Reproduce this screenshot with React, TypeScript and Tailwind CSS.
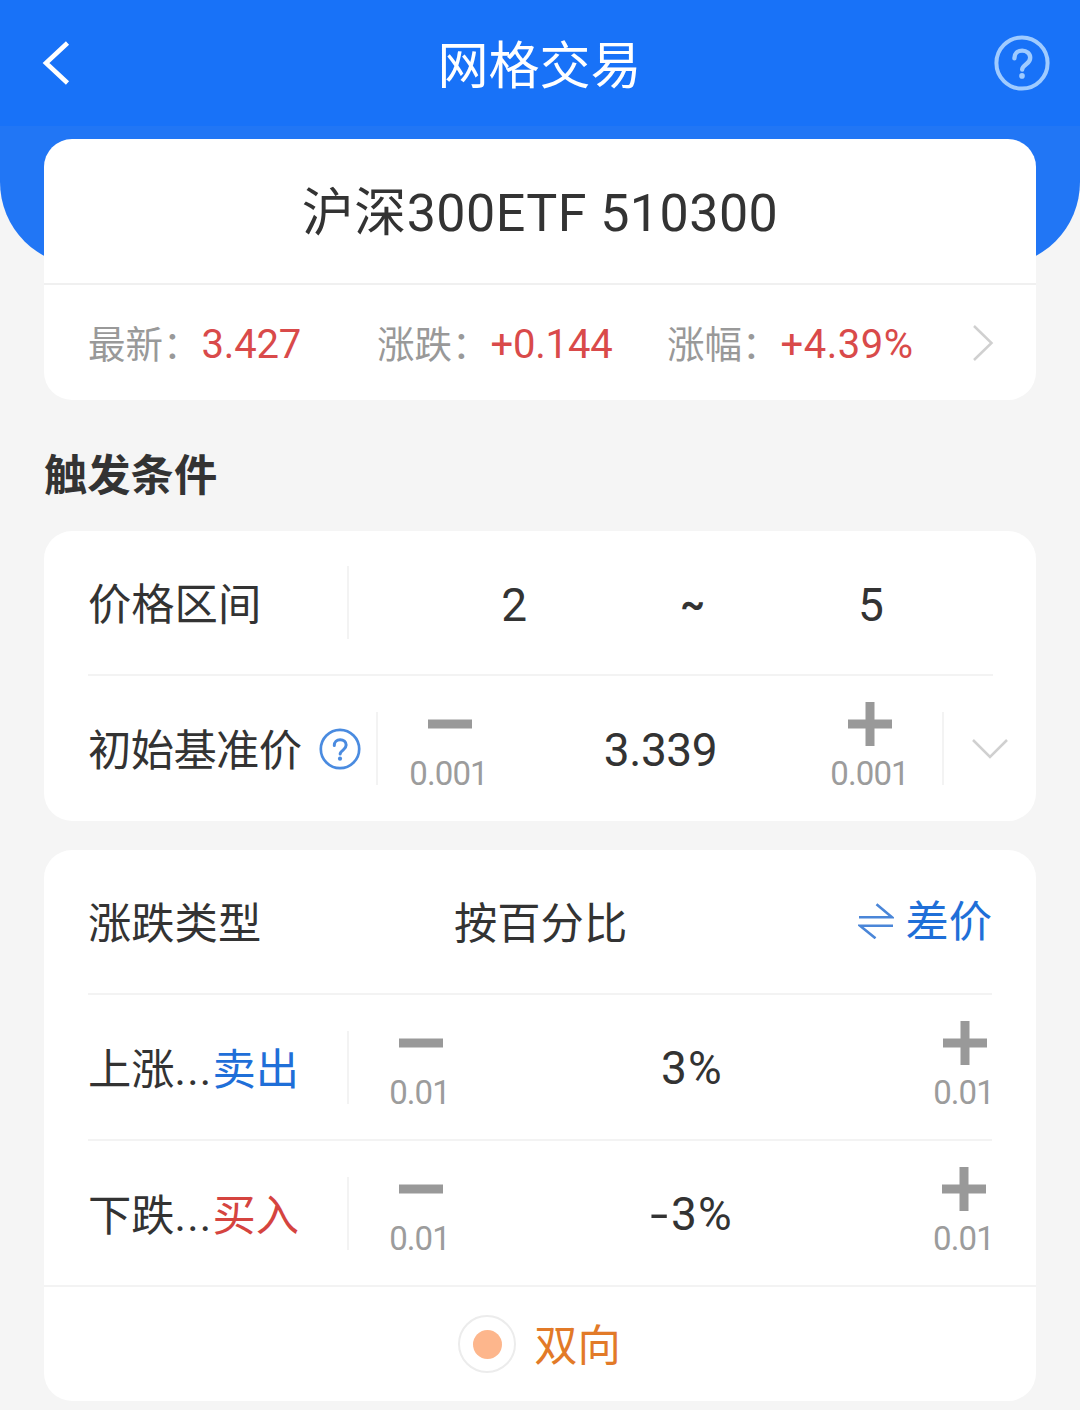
import { useState } from "react";

const quotes = [
  { label: "最新：", value: "3.427", width: "w-[289px]", tracking: "tracking-[-0.2px]" },
  { label: "涨跌：", value: "+0.144", width: "w-[290px]", tracking: "tracking-[-0.2px]" },
  { label: "涨幅：", value: "+4.39%", width: "w-[305px]", tracking: "tracking-[0.5px]" },
];

function HelpIcon({
  className,
  strokeWidth,
}: {
  className: string;
  strokeWidth: number;
}) {
  return (
    <svg
      viewBox="0 0 56 56"
      fill="none"
      stroke="currentColor"
      strokeWidth={strokeWidth}
      className={className}
    >
      <circle cx="28" cy="28" r="25.6" />
      <path
        d="M20.4 23.2c0-4.6 3.3-7.6 7.8-7.6s8 3 8 7.2c0 2.9-1.5 4.5-3.8 6.3-2.7 2.1-4.2 3.3-4.2 5.4"
        strokeWidth={strokeWidth + 0.4}
        strokeLinecap="round"
      />
      <circle cx="28" cy="40.9" r="2.8" fill="currentColor" stroke="none" />
    </svg>
  );
}

function Divider() {
  return <div className="h-[73px] w-[2px] shrink-0 bg-[#f3f3f3]" />;
}

function StepButton({
  type,
  step,
  onClick,
}: {
  type: "minus" | "plus";
  step: number;
  onClick: () => void;
}) {
  return (
    <button
      onClick={onClick}
      className="flex h-full w-[80px] shrink-0 flex-col items-center pt-[26px]"
    >
      <svg viewBox="0 0 44 44" className="ml-[3px] h-[44px] w-[44px] fill-[#999]">
        <rect x="0" y="17.5" width="44" height="9" />
        {type === "plus" && <rect x="17.5" y="0" width="9" height="44" />}
      </svg>
      <span className="mt-[8px] ml-[1px] text-[33px] leading-[40px] tracking-[-0.9px] text-[#9c9c9c]">
        {step}
      </span>
    </button>
  );
}

export default function App() {
  const [basePrice, setBasePrice] = useState(3.339);
  const [rise, setRise] = useState(3);
  const [fall, setFall] = useState(3);

  return (
    <div className="h-[1410px] w-[1080px] overflow-hidden bg-[#f5f5f5] font-[Roboto,'Noto_Sans_CJK_SC',sans-serif] text-[43.3px] leading-[60px] text-[#333]">

      <header className="flex h-[126px] items-center justify-between bg-[#1872f8] pr-[30px] pl-[42px]">
        <svg
          viewBox="0 0 28 44"
          fill="none"
          stroke="white"
          strokeWidth="4.6"
          className="h-[44px] w-[43px]"
          preserveAspectRatio="xMinYMid"
        >
          <path d="M25.5 2 4 22l21.5 20" />
        </svg>

        <h1 className="pt-[7px] text-[51px] text-white">网格交易</h1>

        <HelpIcon
          className="h-[56px] w-[56px] text-[#9fcbff]"
          strokeWidth={4}
        />
      </header>

      <div className="h-[140px] rounded-b-[84px] bg-[#2176f5]" />

      <main className="-mt-[127px] px-[44px]">

        <section className="h-[261px] rounded-[28px] bg-white">
          <div className="flex h-[146px] items-center justify-center border-b-2 border-[#f0f0f0] pt-[5px] text-[52px]">
            <span className="tracking-[0.45px]">沪深300ETF 510300</span>
          </div>

          <div className="flex h-[115px] items-center pl-[44px]">
            {quotes.map((item) => (
              <div
                key={item.label}
                className={`flex shrink-0 items-baseline pt-[4px] whitespace-nowrap ${item.width}`}
              >
                <span className="text-[37.5px] text-[#999]">{item.label}</span>
                <span
                  className={`ml-[1px] text-[40px] text-[#d94a4a] ${item.tracking}`}
                >
                  {item.value}
                </span>
              </div>
            ))}
            <svg
              viewBox="0 0 22 36"
              fill="none"
              stroke="#d0d0d0"
              strokeWidth="2.5"
              className="h-[36px] w-[22px]"
            >
              <path d="M2 1l17.5 17L2 35" />
            </svg>
          </div>
        </section>

        <h2 className="mt-[47px] font-bold">触发条件</h2>

        <section className="mt-[24px] h-[290px] rounded-[28px] bg-white pl-[44px]">
          <div className="mr-[43px] flex h-[145px] items-center border-b-2 border-[#f3f3f3]">
            <span className="w-[259px] pt-[7px]">价格区间</span>
            <Divider />
            <div className="ml-[76px] grid w-[535px] grid-cols-3 items-center pt-[2px] text-center text-[46px]">
              <span className="pt-[2px]">2</span>
              <span className="text-[38px] font-bold">~</span>
              <span className="pt-[2px]">5</span>
            </div>
          </div>

          <div className="flex h-[145px] items-center">
            <span className="w-[231px] pt-[6px] tracking-[-0.6px]">初始基准价</span>
            <HelpIcon
              className="mr-[15px] h-[42px] w-[42px] text-[#4a8be0]"
              strokeWidth={3.6}
            />
            <Divider />
            <div className="ml-[30px] flex h-full w-[501px] items-center justify-between">
              <StepButton
                type="minus"
                step={0.001}
                onClick={() => setBasePrice(basePrice - 0.001)}
              />
              <span className="pt-[2px] pl-[4px] text-[46px] tracking-[-0.4px]">
                {basePrice.toFixed(3)}
              </span>
              <StepButton
                type="plus"
                step={0.001}
                onClick={() => setBasePrice(basePrice + 0.001)}
              />
            </div>
            <div className="ml-[33px]">
              <Divider />
            </div>
            <svg
              viewBox="0 0 36 22"
              fill="none"
              stroke="#d0d0d0"
              strokeWidth="2.5"
              className="ml-[28px] h-[22px] w-[36px]"
            >
              <path d="M1 2l17 17L35 2" />
            </svg>
          </div>
        </section>

        <section className="mt-[29px] h-[551px] rounded-[28px] bg-white">
          <div className="mx-[44px] flex h-[145px] items-center justify-between border-b-2 border-[#f3f3f3]">
            <span className="w-[366px] pt-[7px]">涨跌类型</span>
            <span className="flex-1 pt-[7px]">按百分比</span>
            <button className="flex items-center text-[#1f6fd8]">
              <svg
                viewBox="0 0 36 36"
                fill="none"
                stroke="#4a86d8"
                strokeWidth="2.6"
                className="mr-[11px] mb-[2px] h-[36px] w-[36px]"
              >
                <path d="M1 14.3h33L18.5 1.2M35 22.7H2l15.5 12.6" />
              </svg>
              <span className="pt-[2px]">差价</span>
            </button>
          </div>

          <div className="mx-[44px] flex h-[146px] items-center border-b-2 border-[#f3f3f3]">
            <span className="w-[259px] pt-[7px]">
              上涨<span className="tracking-[1.2px]">...</span>
              <span className="text-[#1f6fd8]">卖出</span>
            </span>
            <Divider />
            <div className="ml-[30px] -mr-[11px] flex h-full flex-1 items-center justify-between">
              <StepButton
                type="minus"
                step={0.01}
                onClick={() => setRise(rise - 0.01)}
              />
              <span className="pt-[2px] pl-[2px] text-[46px] tracking-[1.2px]">
                {rise}%
              </span>
              <StepButton
                type="plus"
                step={0.01}
                onClick={() => setRise(rise + 0.01)}
              />
            </div>
          </div>

          <div className="flex h-[146px] items-center border-b-2 border-[#f3f3f3] px-[44px]">
            <span className="w-[259px] pt-[7px]">
              下跌<span className="tracking-[1.2px]">...</span>
              <span className="text-[#d5443f]">买入</span>
            </span>
            <Divider />
            <div className="ml-[30px] -mr-[11px] flex h-full flex-1 items-center justify-between">
              <StepButton
                type="minus"
                step={0.01}
                onClick={() => setFall(fall + 0.01)}
              />
              <span className="pt-[2px] pl-[4px] text-[46px] tracking-[1.2px]">
                <span className="mr-[4px] inline-block scale-x-140">-</span>
                {fall}%
              </span>
              <StepButton
                type="plus"
                step={0.01}
                onClick={() => setFall(fall - 0.01)}
              />
            </div>
          </div>

          <div className="flex h-[114px] items-center justify-center gap-[18px] pr-[1px]">
            <span className="flex h-[58px] w-[58px] items-center justify-center rounded-full border-2 border-[#ececec]">
              <span className="h-[29px] w-[29px] rounded-full bg-[#fdb68c]" />
            </span>
            <span className="pt-[6px] text-[#e27a28]">双向</span>
          </div>
        </section>

      </main>

    </div>
  );
}
